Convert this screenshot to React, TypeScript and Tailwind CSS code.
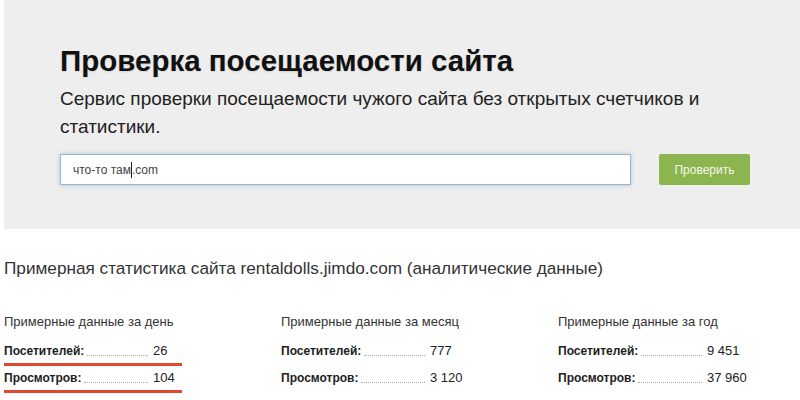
const STATS = [
  { title: 'Примерные данные за день', visitors: '26', views: '104', marked: true },
  { title: 'Примерные данные за месяц', visitors: '777', views: '3 120', marked: false },
  { title: 'Примерные данные за год', visitors: '9 451', views: '37 960', marked: false },
];

function StatRow({ label, value, marked }: { label: string; value: string; marked: boolean }) {
  return (
    <div className={marked ? 'w-[178px] border-b-[3px] border-[#e2472f] pb-[2px]' : 'pb-[5px]'}>
      <div className="flex items-end h-[20px] text-[13px] text-[#222] leading-[20px]">
        <div className="w-[144px] flex items-end">
          <span className="font-bold text-[12px]">{label}</span>
          <span className="flex-1 ml-[3px] mb-[5px] border-b border-dotted border-[#aaa]" />
        </div>
        <span className="ml-[5px]">{value}</span>
      </div>
    </div>
  );
}

export default function App() {
  return (
    <div className="w-[800px] h-[400px] overflow-hidden bg-white" style={{ fontFamily: '"Liberation Sans", Arial, sans-serif' }}>
      <div className="ml-[4px] h-[229px] bg-[#eeeeee] pl-[56px] pt-[42px]">
        <h1 className="text-[29.5px] font-bold leading-[38px] text-[#111] [text-shadow:0_1px_2px_rgba(0,0,0,0.12)]">
          Проверка посещаемости сайта
        </h1>
        <p className="mt-[5px] text-[19px] leading-[28px] text-[#222] w-[680px]">
          Сервис проверки посещаемости чужого сайта без открытых счетчиков и статистики.
        </p>
        <div className="mt-[13px] flex items-center">
          <div className="w-[571px] h-[31px] bg-white border border-[#98b4d8] shadow-[0_0_4px_rgba(100,150,210,0.5)] flex items-center pl-[12px] text-[12px] text-[#444]">
            что-то там<span className="inline-block w-[1px] h-[16px] bg-[#222]" />.com
          </div>
          <button className="ml-[28px] w-[91px] h-[31px] rounded-[2px] bg-[#8db54f] text-[12px] text-[#f2f7ea]">
            Проверить
          </button>
        </div>
      </div>
      <div className="pl-[4px] pt-[28px]">
        <h2 className="text-[17.2px] leading-[22px] text-[#333]">
          Примерная статистика сайта rentaldolls.jimdo.com (аналитические данные)
        </h2>
        <div className="mt-[34px] flex">
          {STATS.map((s) => (
            <div key={s.title} className="w-[277px] shrink-0">
              <div className="text-[13px] leading-[18px] text-[#333] mb-[10px]">{s.title}</div>
              <StatRow label="Посетителей:" value={s.visitors} marked={s.marked} />
              <div className="h-[2px]" />
              <StatRow label="Просмотров:" value={s.views} marked={s.marked} />
            </div>
          ))}
        </div>
      </div>
    </div>
  );
}
